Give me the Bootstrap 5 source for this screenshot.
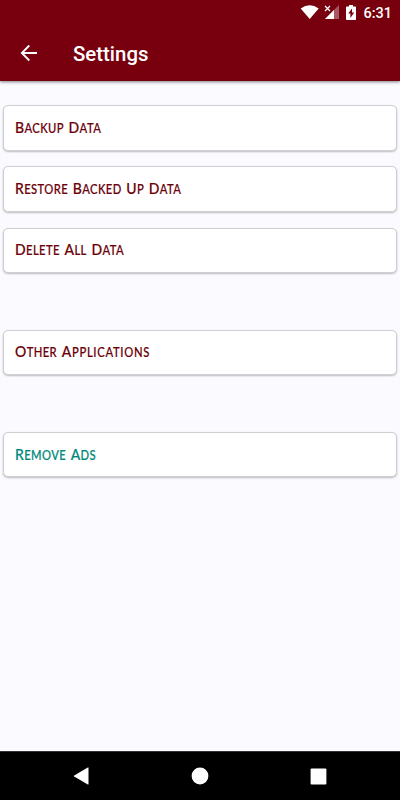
<!DOCTYPE html>
<html lang="en">
<head>
<meta charset="utf-8">
<meta name="viewport" content="width=device-width, initial-scale=1">
<title>Settings</title>
<link href="https://cdn.jsdelivr.net/npm/bootstrap@5.3.0/dist/css/bootstrap.min.css" rel="stylesheet">
<style>
body{background:#fafaff;font-family:Roboto,"Liberation Sans",sans-serif;height:800px;overflow:hidden}
.top-area{background:#78000e;height:81px;box-shadow:0 1px 3px rgba(0,0,0,.5)}
.status-strip{height:26px;padding-right:8px;font-size:14.5px;font-weight:500;line-height:26px}
.status-strip svg{margin:0 6px 1px 0}
.status-strip span{padding-top:1px}
.toolbar{height:55px;padding-left:20px}
.toolbar svg{margin-bottom:2px}
.page-title{font-size:20.4px;font-weight:500;line-height:24px;margin-left:35px;padding-top:1px}
.options{padding:24px 3px 0}
.option{height:45.5px;margin-bottom:15.8px;padding:0 0 0 11.4px;border:1px solid #d0d0d4;border-radius:5px;color:#6b0008;background:#fff;box-shadow:0 1px 2px rgba(0,0,0,.25);font-family:Lato,sans-serif}
.option.section-start{margin-top:40.8px}
.option.accent{color:#00897b}
.words{gap:5.3px;line-height:20px;margin-top:-1px;transform:scaleX(.865);transform-origin:left center}
.words span{display:inline-block;text-transform:uppercase;font-size:13px;font-weight:500;letter-spacing:.45px;-webkit-text-stroke:.2px currentColor}
.words span::first-letter{font-size:16.2px}
.words .long{letter-spacing:.8px}
.nav-keys{height:49px;background:#000;border-top:1px solid #333;padding:0 73px}
</style>
<script src="https://cdn.jsdelivr.net/npm/bootstrap@5.3.0/dist/js/bootstrap.bundle.min.js"></script>
</head>
<body class="d-flex flex-column">
<header class="top-area text-white flex-shrink-0">
  <div class="status-strip d-flex justify-content-end align-items-center">
    <svg width="57" height="17" viewBox="0 0 57 17" fill="#fff" aria-hidden="true">
      <path d="M.7 4.400Q9.700-1.700 18.700 4.400L9.700 15Z"/>
      <path d="M39 1v14H25z" opacity=".35"/>
      <path d="M34 6v9h-9z"/><path d="M25 2l5 5m0-5l-5 5" stroke="#fff" stroke-width="1.2"/>
      <path fill-rule="evenodd" d="M49 1h4v1.500h2.200q.8 0 .8.8v11.900q0 .8-.8.8h-8.400q-.8 0-.8-.8V3.300q0-.8.8-.8H49zM52 4.500l-3.800 5.100h2.200v4.400l3.800-5.500H52z"/>
    </svg>
    <span>6:31</span>
  </div>
  <div class="toolbar d-flex align-items-center">
    <svg width="18" height="18" viewBox="0 0 18 18" fill="none" stroke="#fff" stroke-width="1.8" aria-label="Back"><path d="M17 9H2M9.300 1.500L1.800 9l7.500 7.500"/></svg>
    <h1 class="page-title mb-0">Settings</h1>
  </div>
</header>
<main class="options flex-grow-1 d-flex flex-column">
  <a class="option d-flex align-items-center text-decoration-none flex-shrink-0" href="#"><span class="words d-flex align-items-baseline"><span>Backup</span> <span>Data</span></span></a>
  <a class="option d-flex align-items-center text-decoration-none flex-shrink-0" href="#"><span class="words d-flex align-items-baseline"><span>Restore</span> <span>Backed</span> <span>Up</span> <span>Data</span></span></a>
  <a class="option d-flex align-items-center text-decoration-none flex-shrink-0" href="#"><span class="words d-flex align-items-baseline"><span>Delete</span> <span>All</span> <span>Data</span></span></a>
  <a class="option section-start d-flex align-items-center text-decoration-none flex-shrink-0" href="#"><span class="words d-flex align-items-baseline"><span>Other</span> <span class="long">Applications</span></span></a>
  <a class="option accent section-start d-flex align-items-center text-decoration-none flex-shrink-0" href="#"><span class="words d-flex align-items-baseline"><span>Remove</span> <span>Ads</span></span></a>
</main>
<footer class="nav-keys d-flex justify-content-between align-items-center flex-shrink-0">
  <svg width="17" height="18" viewBox="0 0 17 18" fill="#fff"><path d="M15.500.8v16.400q0 .6-.7.2L1.200 9.600q-.8-.6 0-1.200L14.800.6q.7-.4.7.2z"/></svg>
  <svg width="18" height="18" viewBox="0 0 18 18" fill="#fff"><circle cx="9" cy="9" r="8.400"/></svg>
  <svg width="17" height="17" viewBox="0 0 17 17" fill="#fff"><rect x=".6" y=".6" width="15.800" height="15.800" rx="1"/></svg>
</footer>
</body>
</html>
